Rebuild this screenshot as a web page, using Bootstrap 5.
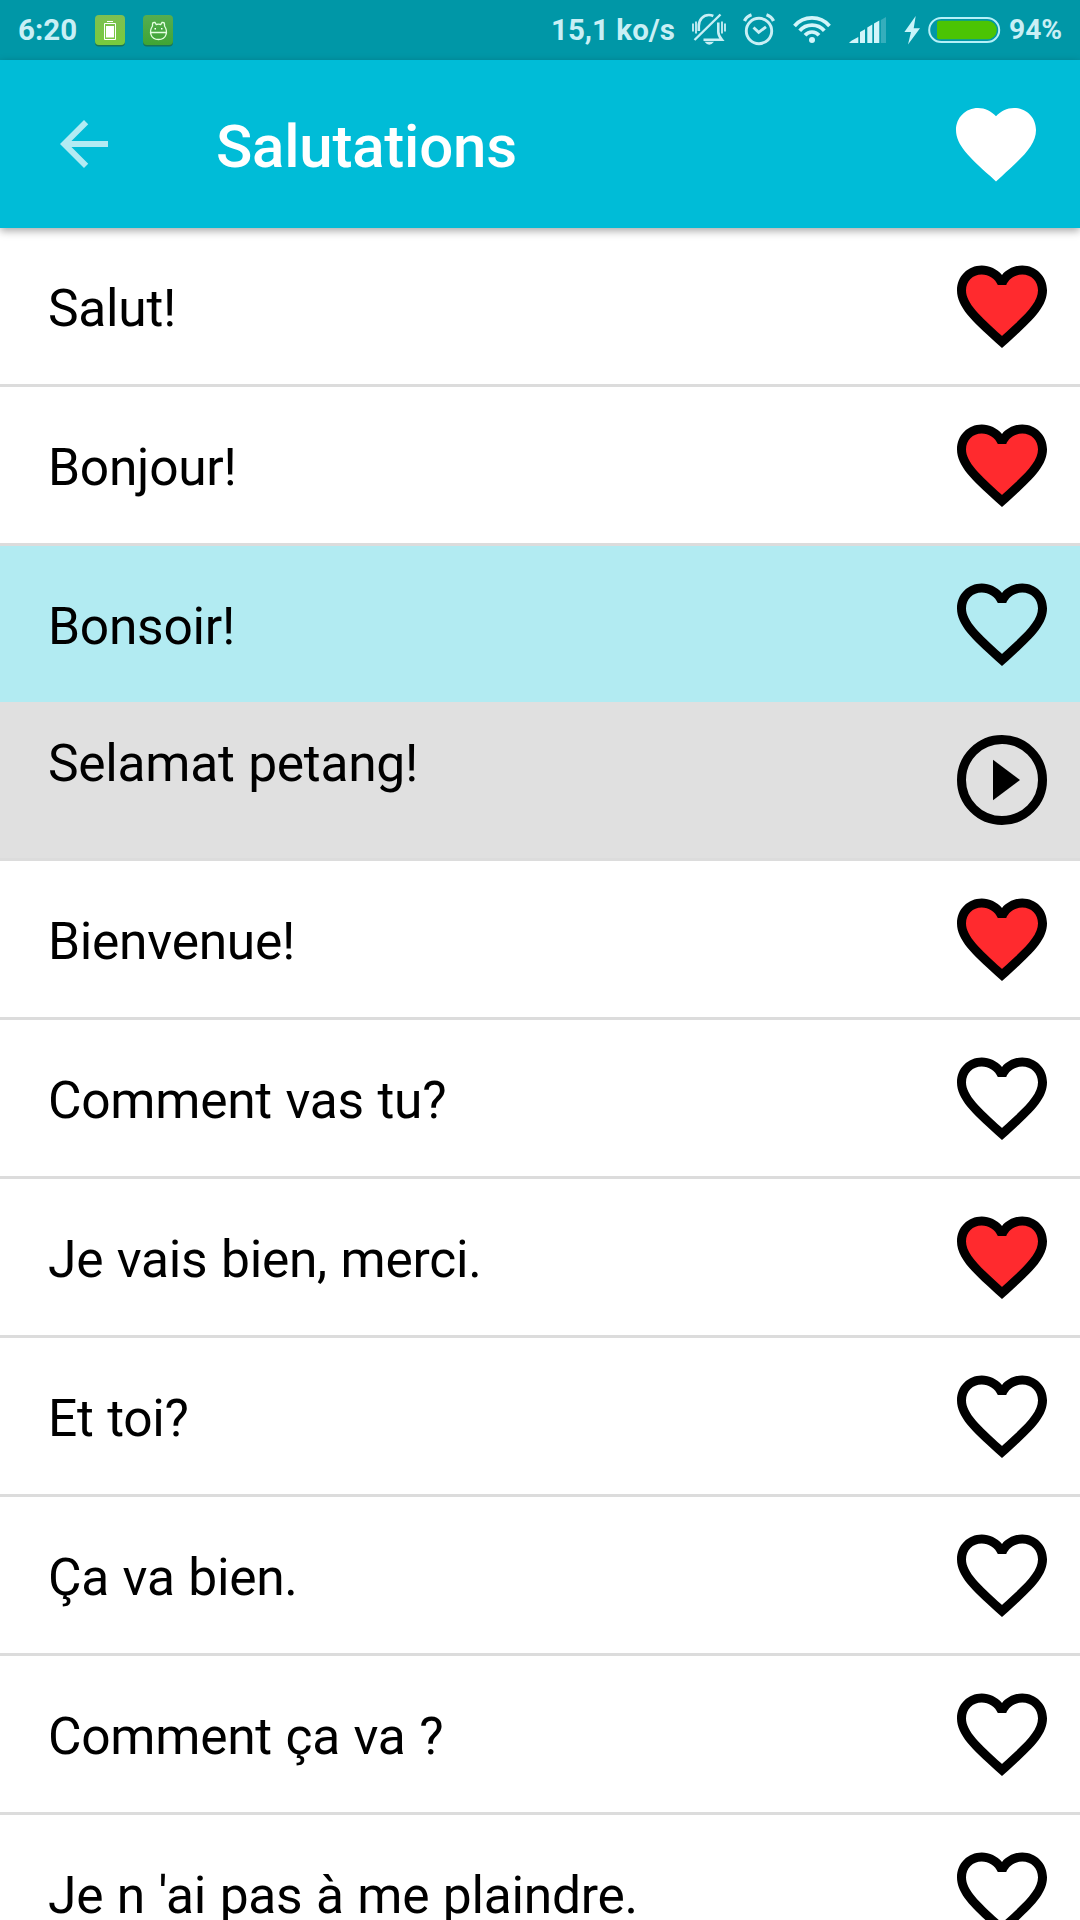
<!DOCTYPE html>
<html lang="fr">
<head>
<meta charset="utf-8">
<meta name="viewport" content="width=device-width, initial-scale=1">
<title>Salutations</title>
<link href="https://cdn.jsdelivr.net/npm/bootstrap@5.3.0/dist/css/bootstrap.min.css" rel="stylesheet">
<style>
  html, body { height: 1920px; overflow: hidden; }
  body { font-family: Roboto, sans-serif; background: #fff; color: #000; }
  svg { display: block; flex: none; }
  .status-bar { height: 60px; background: #0097a7; color: #c9eff5; font-weight: 700; font-size: 29.5px; line-height: 60px; padding: 0 19px 0 18px; }
  .status-bar span { white-space: nowrap; flex: none; }
  .clock { width: 77px; }
  .rate { width: 139px; }
  .percent { width: 52px; font-size: 28.2px; }
  .app-bar { height: 168px; background: #00bcd7; padding: 0 36px 0 48px; box-shadow: 0 3px 8px rgba(0,0,0,.34); z-index: 2; }
  .app-title { font-size: 60px; font-weight: 500; letter-spacing: -.22px; line-height: 72px; margin: 5px 0 0 96px; color: #fff; }
  .phrase { height: 159px; flex: none; padding: 0 24px 0 48px; border: 0 solid #dcdcdc; border-bottom-width: 3px; font-size: 51.5px; letter-spacing: -.27px; word-spacing: 1.1px; line-height: 60px; }
  .phrase-active { height: 156px; border-bottom: 0; background: #b2ebf2; }
  .phrase-translation { background: #e0e0e0; }
  .phrase span { padding-top: 5px; }
  .phrase-translation span { margin-bottom: 38px; }
  .fav, .play { width: 108px; height: 108px; }
</style>
<script src="https://cdn.jsdelivr.net/npm/bootstrap@5.3.0/dist/js/bootstrap.bundle.min.js"></script>
</head>
<body class="d-flex flex-column">
<svg width="0" height="0" class="position-absolute">
  <defs>
    <path id="heart-line" d="M16.5 3c-1.74 0-3.41.81-4.5 2.09C10.91 3.81 9.24 3 7.5 3 4.42 3 2 5.42 2 8.5c0 3.78 3.4 6.86 8.55 11.54L12 21.35l1.45-1.32C18.6 15.36 22 12.28 22 8.5 22 5.42 19.58 3 16.5 3zm-4.4 15.55l-.1.1-.1-.1C7.14 14.24 4 11.39 4 8.5 4 6.5 5.5 5 7.5 5c1.54 0 3.04.99 3.57 2.36h1.87C13.46 5.99 14.96 5 16.5 5c2 0 3.5 1.5 3.5 3.5 0 2.89-3.14 5.74-7.9 10.05z"/>
    <g id="fav-on"><path fill="#ff2a2e" stroke="#ff2a2e" stroke-width=".4" d="M12.100 18.550l-.1.1-.1-.1C7.140 14.240 4 11.390 4 8.500 4 6.500 5.500 5 7.500 5c1.540 0 3.040.99 3.570 2.360h1.870C13.460 5.990 14.960 5 16.500 5c2 0 3.500 1.500 3.500 3.500 0 2.890-3.140 5.740-7.900 10.050z"/><use href="#heart-line"/></g>
    <linearGradient id="lime" x2="0" y2="1"><stop stop-color="#7dbf52"/><stop offset="1" stop-color="#78cb3d"/></linearGradient>
    <linearGradient id="leaf" x2="0" y2="1"><stop stop-color="#55ad50"/><stop offset="1" stop-color="#3fa535"/></linearGradient>
  </defs>
</svg>

<div class="status-bar d-flex align-items-center flex-shrink-0">
  <span class="clock">6:20</span>
  <svg class="me-3" width="32" height="60" viewBox="0 0 32 60"><rect y="17" width="30" height="29.500" rx="4" fill="#187557"/><rect y="15" width="30" height="30" rx="4" fill="url(#lime)"/><path d="M9.500 23.500h11v16h-11zM12 21.500h6" fill="none" stroke="#fff"/><path d="M11 26h8v11.500h-8z" fill="#fff"/></svg>
  <svg width="30" height="60" viewBox="0 0 30 60"><rect y="17" width="30" height="29.500" rx="4" fill="#187557"/><rect y="15" width="30" height="30" rx="4" fill="url(#leaf)"/><path d="M7.500 32.500h16M9.500 26v-2q0-1.500 1.500-1.500h1l1.200 2q2.300-.6 4.600 0l1.200-2h1q1.500 0 1.500 1.500v2c3.500 5 2.500 13.500-6 13.500s-9.500-8.500-6-13.500z" fill="none" stroke="#e4ffe0" stroke-width="1.300"/><path d="M11.500 28H13v1.500h-1.500zM18 28h1.500v1.500H18z" fill="#fff"/></svg>
  <span class="rate ms-auto">15,1 ko/s</span>
  <!-- ringer off -->
  <svg width="45" height="60" viewBox="690 0 45 60" fill="none" stroke="#c9eff5"><path stroke-width="1.800" d="M693 23.500v8M696 21.500v12M725 23.500v8M722 21.500v12"/><path stroke-width="2.400" d="M694.500 40L720.500 14.500"/><path stroke-width="2.600" d="M698.800 31V26c0-6.500 4.500-11 10-11q2.500 0 4.500 1M718.300 22.500V32q0 3.500 3.500 7.700H703.500"/><path d="M704.500 41.700h9.500q-4.700 6-9.500 0z" fill="#c9eff5" stroke="none"/></svg>
  <!-- alarm -->
  <svg width="50" height="60" viewBox="735 0 50 60" fill="none" stroke="#c9eff5" stroke-width="2.900"><circle cx="759" cy="31" r="12.700"/><path d="M744.500 21q2-4.500 7-6.200M773.500 21q-2-4.500-7-6.200" stroke-width="3.300"/><path d="M753.500 27.500l5.200 4.800 7.300-5.500"/></svg>
  <!-- wifi -->
  <svg width="55" height="60" viewBox="785 0 55 60" fill="none" stroke="#d2f5fa" stroke-width="3.700"><path d="M794.500 26a23 23 0 0 1 35 0M799.700 30.800a16 16 0 0 1 24.600 0M805 35.200a9.300 9.300 0 0 1 14 0"/><circle cx="812" cy="40" r="3" fill="#d2f5fa" stroke="none"/></svg>
  <!-- cell signal -->
  <svg width="55" height="60" viewBox="840 0 55 60" fill="#d2f5fa"><path d="M849 43q1-2 9.300-6v6zM860 43v-11l5-2.700V43zM867.300 43V27.500l5-3V43zM874 43V23.500l5.300-3V43z"/><path d="M880.800 43V20l5.200-3v26z" opacity=".25"/></svg>
  <!-- charging -->
  <svg width="30" height="60" viewBox="895 0 30 60" fill="#c9f5fa"><path d="M915.700 16l-11.300 16h6.600l-3 12.500 12-16.300h-6.300z"/></svg>
  <svg width="84" height="60" viewBox="925 0 84 60"><rect x="929.200" y="17.900" width="70" height="24.200" rx="12.100" fill="none" stroke="#b5f0f8" stroke-width="2"/><path fill="#4bc404" d="M939 20.700h48.500a9.300 9.300 0 0 1 0 18.600H939q-2 0-2-2V22.700q0-2 2-2z"/></svg>
  <span class="percent">94%</span>
</div>

<header class="app-bar d-flex align-items-center flex-shrink-0 position-relative">
  <svg width="72" height="72" viewBox="0 0 24 24" fill="#fff" opacity=".7"><path d="M20 11H7.830l5.590-5.590L12 4l-8 8 8 8 1.410-1.410L7.830 13H20v-2z"/></svg>
  <h1 class="app-title">Salutations</h1>
  <svg class="ms-auto" width="96" height="96" viewBox="0 0 24 24" fill="#fff"><path d="M12 21.350l-1.450-1.320C5.400 15.360 2 12.280 2 8.500 2 5.420 4.420 3 7.500 3c1.740 0 3.410.81 4.500 2.090C13.090 3.810 14.760 3 16.500 3 19.580 3 22 5.420 22 8.500c0 3.780-3.400 6.860-8.550 11.540L12 21.350z"/></svg>
</header>

<main class="d-flex flex-column flex-shrink-0">
  <div class="phrase d-flex align-items-center justify-content-between"><span>Salut!</span><svg class="fav" viewBox="0 0 24 24"><use href="#fav-on"/></svg></div>
  <div class="phrase d-flex align-items-center justify-content-between"><span>Bonjour!</span><svg class="fav" viewBox="0 0 24 24"><use href="#fav-on"/></svg></div>
  <div class="phrase phrase-active d-flex align-items-center justify-content-between"><span>Bonsoir!</span><svg class="fav" viewBox="0 0 24 24"><use href="#heart-line"/></svg></div>
  <div class="phrase phrase-translation d-flex align-items-center justify-content-between"><span>Selamat petang!</span><svg class="play" viewBox="0 0 24 24"><path d="M10 16.500l6-4.500-6-4.500z"/><circle cx="12" cy="12" r="9" fill="none" stroke="#000" stroke-width="2"/></svg></div>
  <div class="phrase d-flex align-items-center justify-content-between"><span>Bienvenue!</span><svg class="fav" viewBox="0 0 24 24"><use href="#fav-on"/></svg></div>
  <div class="phrase d-flex align-items-center justify-content-between"><span>Comment vas tu?</span><svg class="fav" viewBox="0 0 24 24"><use href="#heart-line"/></svg></div>
  <div class="phrase d-flex align-items-center justify-content-between"><span>Je vais bien, merci.</span><svg class="fav" viewBox="0 0 24 24"><use href="#fav-on"/></svg></div>
  <div class="phrase d-flex align-items-center justify-content-between"><span>Et toi?</span><svg class="fav" viewBox="0 0 24 24"><use href="#heart-line"/></svg></div>
  <div class="phrase d-flex align-items-center justify-content-between"><span>Ça va bien.</span><svg class="fav" viewBox="0 0 24 24"><use href="#heart-line"/></svg></div>
  <div class="phrase d-flex align-items-center justify-content-between"><span>Comment ça va ?</span><svg class="fav" viewBox="0 0 24 24"><use href="#heart-line"/></svg></div>
  <div class="phrase d-flex align-items-center justify-content-between"><span>Je n 'ai pas à me plaindre.</span><svg class="fav" viewBox="0 0 24 24"><use href="#heart-line"/></svg></div>
</main>
</body>
</html>
